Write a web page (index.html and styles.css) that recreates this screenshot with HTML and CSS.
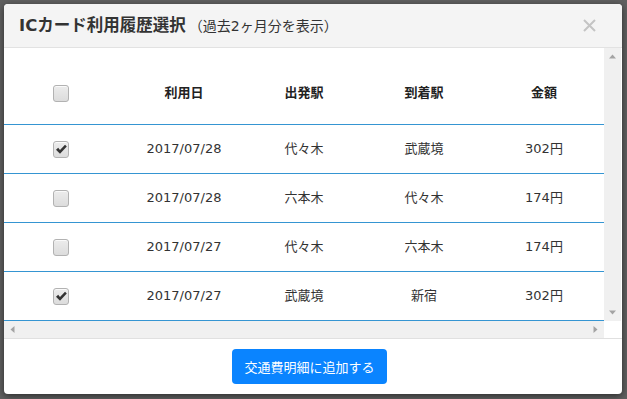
FILE: index.html
```html
<!DOCTYPE html>
<html lang="ja">
<head>
<meta charset="utf-8">
<title>ICカード利用履歴選択</title>
<link rel="stylesheet" href="styles.css">
</head>
<body>
<div class="backdrop">
  <div class="modal">
    <div class="modal-header">
      <h4 class="modal-title">ICカード利用履歴選択<span class="sub">（過去2ヶ月分を表示）</span></h4>
      <button class="close" type="button" aria-label="閉じる">
        <svg width="13" height="13" viewBox="0 0 13 13"><path d="M1 1 L12 12 M12 1 L1 12" stroke="#c4c4c4" stroke-width="2" fill="none"/></svg>
      </button>
    </div>
    <div class="modal-body">
      <div class="viewport">
        <table class="history">
          <colgroup>
            <col class="c-col"><col class="c-col"><col class="c-col"><col class="c-col"><col class="c-col">
          </colgroup>
          <thead>
            <tr>
              <th class="cell-check"><input type="checkbox" class="cb"></th>
              <th>利用日</th>
              <th>出発駅</th>
              <th>到着駅</th>
              <th>金額</th>
            </tr>
          </thead>
          <tbody>
            <tr>
              <td class="cell-check"><input type="checkbox" class="cb" checked></td>
              <td>2017/07/28</td><td>代々木</td><td>武蔵境</td><td>302円</td>
            </tr>
            <tr>
              <td class="cell-check"><input type="checkbox" class="cb"></td>
              <td>2017/07/28</td><td>六本木</td><td>代々木</td><td>174円</td>
            </tr>
            <tr>
              <td class="cell-check"><input type="checkbox" class="cb"></td>
              <td>2017/07/27</td><td>代々木</td><td>六本木</td><td>174円</td>
            </tr>
            <tr>
              <td class="cell-check"><input type="checkbox" class="cb" checked></td>
              <td>2017/07/27</td><td>武蔵境</td><td>新宿</td><td>302円</td>
            </tr>
          </tbody>
        </table>
      </div>
      <div class="vscroll">
        <svg class="sb-btn" width="17" height="17" viewBox="0 0 17 17"><polygon points="5,10.5 12,10.5 8.5,6.5" fill="#a3a3a3"/></svg>
        <svg class="sb-btn" width="17" height="17" viewBox="0 0 17 17"><polygon points="5,6.5 12,6.5 8.5,10.5" fill="#a3a3a3"/></svg>
      </div>
      <div class="hscroll">
        <svg class="sb-btn" width="17" height="17" viewBox="0 0 17 17"><polygon points="10.5,5 10.5,12 6.5,8.5" fill="#a3a3a3"/></svg>
        <svg class="sb-btn" width="17" height="17" viewBox="0 0 17 17"><polygon points="6.5,5 6.5,12 10.5,8.5" fill="#a3a3a3"/></svg>
      </div>
      <div class="corner"></div>
    </div>
    <div class="modal-footer">
      <button class="btn-primary" type="button">交通費明細に追加する</button>
    </div>
  </div>
</div>
</body>
</html>
```

FILE: styles.css
```css
html, body {
  margin: 0;
  padding: 0;
}

body {
  background: #606060;
  font-family: "DejaVu Sans", "Noto Sans CJK JP", sans-serif;
  color: #333;
}

.backdrop {
  box-sizing: border-box;
  height: 399px;
  padding: 4px 5px 5px 4px;
}

.modal {
  width: 618px;
  height: 390px;
  background: #fff;
  border-radius: 4px;
  box-shadow: 0 2px 7px rgba(0, 0, 0, 0.55);
  display: flex;
  flex-direction: column;
  overflow: hidden;
}

.modal-header {
  box-sizing: border-box;
  height: 44px;
  flex: none;
  background: #f4f4f4;
  border-bottom: 1px solid #e2e2e2;
  display: flex;
  align-items: center;
  padding: 0 26px 0 15px;
}

.modal-title {
  flex: 1;
  margin: 0;
  font-size: 16.5px;
  line-height: 24px;
  font-weight: bold;
  color: #333;
}

.sub {
  font-size: 14px;
  font-weight: normal;
  margin-left: 3px;
}

.close {
  width: 13px;
  height: 13px;
  padding: 0;
  margin: 0;
  border: 0;
  background: none;
  display: block;
}

.close svg {
  display: block;
}

.modal-body {
  flex: none;
  height: 290px;
  display: grid;
  grid-template-columns: 600px 17px;
  grid-template-rows: 273px 17px;
}

.viewport {
  overflow: hidden;
}

.vscroll {
  background: #f0f0f0;
  display: flex;
  flex-direction: column;
  justify-content: space-between;
}

.hscroll {
  background: #f0f0f0;
  display: flex;
  justify-content: space-between;
}

.corner {
  background: #fff;
}

.sb-btn {
  display: block;
  flex: none;
}

.history {
  border-collapse: collapse;
  table-layout: fixed;
  width: 600px;
}

.c-col {
  width: 120px;
}

.history th,
.history td {
  padding: 0;
  text-align: center;
  font-size: 13px;
  line-height: 20px;
  border-bottom: 1px solid #3595d2;
}

.history th {
  height: 20px;
  padding-top: 35px;
  padding-bottom: 21px;
  font-weight: bold;
  color: #222;
  vertical-align: top;
}

.history td {
  height: 48px;
  vertical-align: middle;
  color: #333;
}

.history .cell-check {
  padding-right: 6px;
}

.cb {
  appearance: none;
  -webkit-appearance: none;
  box-sizing: border-box;
  width: 16px;
  height: 17px;
  margin: 0;
  vertical-align: middle;
  border: 1px solid #b2b2b2;
  border-radius: 3px;
  background: linear-gradient(#ececec, #dcdcdc);
  box-shadow: inset 0 1px 0 #fafafa;
}

.cb:checked {
  background-image: url("data:image/svg+xml,%3Csvg xmlns='http://www.w3.org/2000/svg' width='14' height='15'%3E%3Cpath d='M2 7.8 L4.2 5.8 L6 8 L11 2.8 L12.8 4.6 L6 11.8 Z' fill='%23333'/%3E%3C/svg%3E"), linear-gradient(#ececec, #dcdcdc);
  background-repeat: no-repeat;
  background-position: center;
}

.modal-footer {
  flex: none;
  border-top: 1px solid #e0e0e0;
  padding: 10px 0;
  display: flex;
  justify-content: center;
}

.btn-primary {
  box-sizing: border-box;
  width: 155px;
  height: 35px;
  margin-right: 7px;
  border: 0;
  border-radius: 4px;
  background: #0a84ff;
  color: #fff;
  font-family: "Noto Sans CJK JP", sans-serif;
  font-size: 13px;
  padding: 0;
}
```
